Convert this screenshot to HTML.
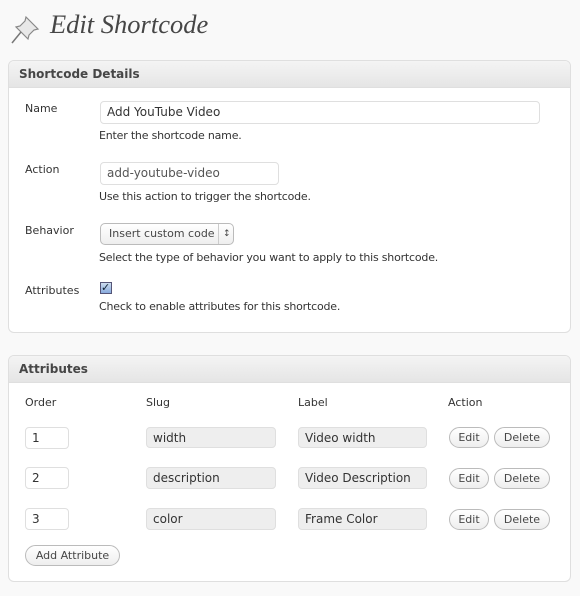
<!DOCTYPE html>
<html><head><style>
body{margin:0;width:580px;height:596px;background:#f9f9f9;font-family:"DejaVu Sans","Liberation Sans",sans-serif;font-size:11px;color:#333;position:relative;overflow:hidden}
.a{position:absolute}
h1{position:absolute;left:50px;top:9px;margin:0;font-family:"Liberation Serif",serif;font-style:italic;font-weight:normal;font-size:26.5px;color:#464646}
.panel{position:absolute;left:8px;width:561px;background:#fff;border:1px solid #dfdfdf;border-radius:6px;overflow:hidden}
.hd{height:26px;background:linear-gradient(#f4f4f4,#e5e5e5);border-bottom:1px solid #dfdfdf;font-weight:600;font-size:12px;line-height:26px;padding-left:10px;color:#464646;font-family:"DejaVu Sans",sans-serif}
.inp{position:absolute;border:1px solid #dfdfdf;border-radius:4px;background:#fff;font-size:12px;line-height:21px;padding-left:6px;box-sizing:border-box;color:#333}
.ro{background:#eee}
.btn{position:absolute;border:1px solid #bbb;border-radius:11px;background:linear-gradient(#fff,#eee);font-size:11px;text-align:center;line-height:19px;height:21px;box-sizing:border-box;color:#464646}
.help{position:absolute;left:99px;font-size:11px;color:#333;letter-spacing:-0.2px}
</style></head><body>
<svg class="a" style="left:10px;top:13px" width="34" height="32" viewBox="0 0 34 32"><path d="M16 4 L28 16 L24 17 L19 22 L18 26 L6 14 L10 13 L15 8 Z" fill="#e8e8e8" stroke="#888" stroke-width="1.2"/><path d="M11 19 L2 30" stroke="#777" stroke-width="1.5"/></svg>
<h1>Edit Shortcode</h1>
<div class="panel" style="top:60px;height:271px"><div class="hd">Shortcode Details</div></div>
<div class="a" style="left:25px;top:102px">Name</div>
<div class="inp" style="left:100px;top:101px;width:440px;height:23px">Add YouTube Video</div>
<div class="help" style="top:129px">Enter the shortcode name.</div>
<div class="a" style="left:25px;top:163px">Action</div>
<div class="inp" style="left:100px;top:162px;width:179px;height:23px;color:#555">add-youtube-video</div>
<div class="help" style="top:190px">Use this action to trigger the shortcode.</div>
<div class="a" style="left:25px;top:224px">Behavior</div>
<div class="btn" style="left:100px;top:223px;width:134px;height:22px;border-radius:5px;text-align:left;padding-left:8px;line-height:20px">Insert custom code <span style="position:absolute;left:117px;top:0;border-left:1px solid #ccc;padding-left:4px;font-size:9px">&#x2195;</span></div>
<div class="help" style="top:251px">Select the type of behavior you want to apply to this shortcode.</div>
<div class="a" style="left:25px;top:284px">Attributes</div>
<div class="a" style="left:100px;top:282px;width:10px;height:10px;border:1px solid #557;background:linear-gradient(#cde,#8ad);font-size:11px;line-height:9px;color:#123">&#10003;</div>
<div class="help" style="top:300px">Check to enable attributes for this shortcode.</div>

<div class="panel" style="top:355px;height:225px"><div class="hd">Attributes</div></div>
<div class="a" style="left:25px;top:396px">Order</div>
<div class="a" style="left:146px;top:396px">Slug</div>
<div class="a" style="left:298px;top:396px">Label</div>
<div class="a" style="left:448px;top:396px">Action</div>

<div class="inp" style="left:25px;top:427px;width:44px;height:22px">1</div>
<div class="inp ro" style="left:146px;top:427px;width:130px;height:21px">width</div>
<div class="inp ro" style="left:298px;top:427px;width:129px;height:21px">Video width</div>
<div class="btn" style="left:449px;top:427px;width:40px">Edit</div>
<div class="btn" style="left:494px;top:427px;width:56px">Delete</div>

<div class="inp" style="left:25px;top:467px;width:44px;height:22px">2</div>
<div class="inp ro" style="left:146px;top:467px;width:130px;height:22px">description</div>
<div class="inp ro" style="left:298px;top:467px;width:129px;height:22px">Video Description</div>
<div class="btn" style="left:449px;top:468px;width:40px">Edit</div>
<div class="btn" style="left:494px;top:468px;width:56px">Delete</div>

<div class="inp" style="left:25px;top:508px;width:44px;height:22px">3</div>
<div class="inp ro" style="left:146px;top:508px;width:130px;height:22px">color</div>
<div class="inp ro" style="left:298px;top:508px;width:129px;height:22px">Frame Color</div>
<div class="btn" style="left:449px;top:509px;width:40px">Edit</div>
<div class="btn" style="left:494px;top:509px;width:56px">Delete</div>

<div class="btn" style="left:25px;top:545px;width:95px">Add Attribute</div>
</body></html>
